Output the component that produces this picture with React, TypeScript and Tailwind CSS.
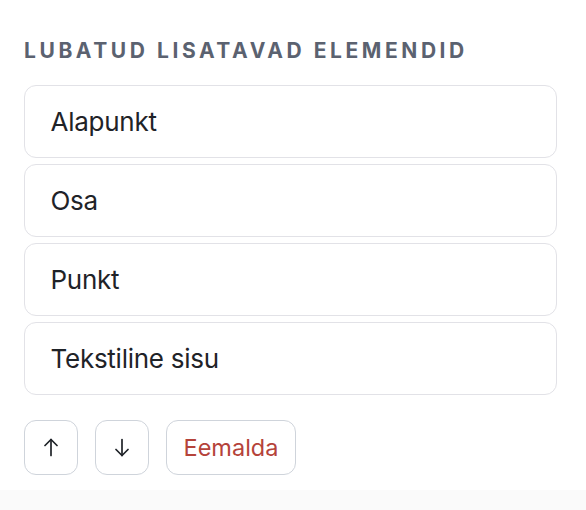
const items = ['Alapunkt', 'Osa', 'Punkt', 'Tekstiline sisu'];

function Arrow({ down }: { down?: boolean }) {
  return (
    <svg width="14" height="19" viewBox="0 0 14 19" fill="none" stroke="#1f2328" strokeWidth="1.7" strokeLinecap="round" strokeLinejoin="round" className={down ? 'rotate-180' : ''}>
      <path d="M7 1.5v16" />
      <path d="M1 7.5l6-6 6 6" />
    </svg>
  );
}

export default function App() {
  return (
    <div className="min-h-[510px] flex flex-col bg-[#fafafa]" style={{ fontFamily: 'Inter, "Noto Sans", sans-serif' }}>
      <div className="bg-white px-6 pt-[38.5px] pb-[15px]">
        <h2 className="text-[21px] leading-[24px] font-bold tracking-[0.17em] text-[#5b6270] uppercase">
          Lubatud lisatavad elemendid
        </h2>

        <ul className="mt-[22px] flex flex-col gap-[5.5px] w-[533px]">
          {items.map((item) => (
            <li
              key={item}
              className="h-[73.5px] flex items-center px-[25.5px] rounded-[12px] border-[1.5px] border-[#e2e2e7] bg-white text-[26px] tracking-[-0.01em] text-[#1f2328]"
            >
              {item}
            </li>
          ))}
        </ul>

        <div className="mt-[25px] flex gap-[17px]">
          <button className="w-[54px] h-[55px] flex items-center justify-center rounded-[12px] border-[1.5px] border-[#cfd4db] bg-white">
            <Arrow />
          </button>
          <button className="w-[54px] h-[55px] flex items-center justify-center rounded-[12px] border-[1.5px] border-[#cfd4db] bg-white">
            <Arrow down />
          </button>
          <button className="w-[130px] h-[55px] flex items-center justify-center rounded-[12px] border-[1.5px] border-[#cfd4db] bg-white text-[23.5px] text-[#b5433a]">
            Eemalda
          </button>
        </div>
      </div>
    </div>
  );
}
